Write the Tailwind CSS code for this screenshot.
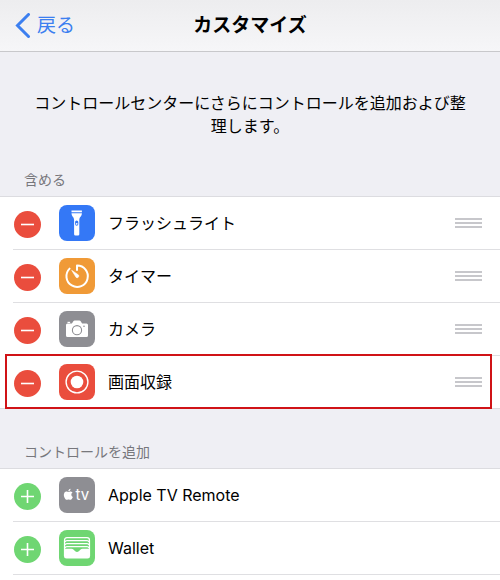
<!DOCTYPE html>
<html lang="ja">
  <head>
    <meta charset="UTF-8" />
    <meta name="viewport" content="width=device-width, initial-scale=1.0" />
    <title>カスタマイズ</title>
    <script src="https://cdn.jsdelivr.net/npm/@tailwindcss/browser@4"></script>
  </head>
  <body
    class="flex min-h-screen flex-col bg-[#efeff4] font-['Inter','Noto_Sans_CJK_JP',sans-serif] text-base text-black"
  >
    <header
      class="grid h-[52px] grid-cols-[1fr_auto_1fr] items-center border-b border-[#c8c8cb] bg-linear-to-b from-[#ededef] to-[#f6f6f8] px-[15px] pt-px text-[19px]"
    >
      <button type="button" class="flex items-center gap-1.5 text-[#3c7ff0]">
        <svg class="h-[26px] w-4" viewBox="0 0 16 26" fill="none" aria-hidden="true">
          <path d="M13.5 1.5 2.5 12.500l11 11" stroke="currentColor" stroke-width="3" stroke-linecap="round" />
        </svg>
        戻る
      </button>
      <h1 class="font-bold">カスタマイズ</h1>
    </header>

    <main class="flex grow flex-col">
      <p class="px-8 pt-10 text-center leading-[23px]">
        コントロールセンターにさらにコントロールを追加および整理します。
      </p>

      <!-- 含める -->
      <h2 class="px-6 pt-8 pb-1.5 text-sm leading-5 text-[#77777c]">含める</h2>
      <ul class="border-t border-[#dcdce0] bg-white">
        <li class="flex h-[53px] pl-[13px]">
          <div class="flex grow items-center border-b border-[#dfdfe2] pr-[18px]">
            <button type="button" class="pt-0.5 pl-px" aria-label="フラッシュライトを削除">
              <svg class="size-[27px]" viewBox="0 0 27 27" aria-hidden="true">
                <circle cx="13.5" cy="13.5" r="13.5" fill="#ea4d3d" />
                <path d="M7 13.5h13" stroke="#fff" stroke-width="1.6" />
              </svg>
            </button>
            <svg class="ml-[18px] size-9" viewBox="0 0 36 36" aria-hidden="true">
              <rect width="36" height="36" rx="8" fill="#3478f6" />
              <path d="M12.5 5.5h10.4v1.7H12.5zM12.5 8.2h10.4c0 3-2.6 3.9-2.6 6.6v14.4q0 1.3-1.3 1.3h-2.6q-1.3 0-1.3-1.3V14.8c0-2.7-2.6-3.6-2.6-6.6z" fill="#fff" />
              <rect x="16.1" y="15.5" width="3.2" height="5.2" rx="1.6" fill="#3478f6" />
              <circle cx="17.7" cy="18.8" r="0.9" fill="#fff" />
            </svg>
            <span class="grow pl-[13px]">フラッシュライト</span>
            <button type="button" aria-label="フラッシュライトを並べ替え">
              <svg class="h-2.5 w-[27px]" viewBox="0 0 27 10" fill="#c7c7cb" aria-hidden="true">
                <path d="M0 0h27v2H0zM0 4h27v2H0zM0 8h27v2H0z" />
              </svg>
            </button>
          </div>
        </li>
        <li class="flex h-[53px] pl-[13px]">
          <div class="flex grow items-center border-b border-[#dfdfe2] pr-[18px]">
            <button type="button" class="pt-0.5 pl-px" aria-label="タイマーを削除">
              <svg class="size-[27px]" viewBox="0 0 27 27" aria-hidden="true">
                <circle cx="13.5" cy="13.5" r="13.5" fill="#ea4d3d" />
                <path d="M7 13.5h13" stroke="#fff" stroke-width="1.6" />
              </svg>
            </button>
            <svg class="ml-[18px] size-9" viewBox="0 0 36 36" aria-hidden="true">
              <rect width="36" height="36" rx="8" fill="#f09a37" />
              <path d="M18 12V7.5A10.7 10.7 0 1 1 10.6 10.6" fill="none" stroke="#fff" stroke-width="2" stroke-linecap="round" stroke-linejoin="round" />
              <path d="M12.700 12.3 19.5 17a1.700 1.700 0 0 1-2.300 2.400z" fill="#fff" stroke="#fff" stroke-width="0.6" stroke-linejoin="round" />
            </svg>
            <span class="grow pl-[13px]">タイマー</span>
            <button type="button" aria-label="タイマーを並べ替え">
              <svg class="h-2.5 w-[27px]" viewBox="0 0 27 10" fill="#c7c7cb" aria-hidden="true">
                <path d="M0 0h27v2H0zM0 4h27v2H0zM0 8h27v2H0z" />
              </svg>
            </button>
          </div>
        </li>
        <li class="flex h-[53px] pl-[13px]">
          <div class="flex grow items-center border-b border-[#dfdfe2] pr-[18px]">
            <button type="button" class="pt-0.5 pl-px" aria-label="カメラを削除">
              <svg class="size-[27px]" viewBox="0 0 27 27" aria-hidden="true">
                <circle cx="13.5" cy="13.5" r="13.5" fill="#ea4d3d" />
                <path d="M7 13.5h13" stroke="#fff" stroke-width="1.6" />
              </svg>
            </button>
            <svg class="ml-[18px] size-9" viewBox="0 0 36 36" aria-hidden="true">
              <rect width="36" height="36" rx="8" fill="#8e8e93" />
              <path d="M8.5 12.4h4.4l1.6-2.3q.4-.6 1.100-.6h4.800q.7 0 1.100.6l1.600 2.300h4.400q1.500 0 1.500 1.500v10.600q0 1.500-1.500 1.500h-19q-1.500 0-1.500-1.500V13.9q0-1.500 1.500-1.500z" fill="#fff" />
              <rect x="8.5" y="10.8" width="2.6" height="1.2" fill="#fff" />
              <circle cx="18" cy="19.2" r="4.6" fill="none" stroke="#8e8e93" stroke-width="1.1" />
              <circle cx="25" cy="15.2" r="0.8" fill="#8e8e93" />
            </svg>
            <span class="grow pl-[13px]">カメラ</span>
            <button type="button" aria-label="カメラを並べ替え">
              <svg class="h-2.5 w-[27px]" viewBox="0 0 27 10" fill="#c7c7cb" aria-hidden="true">
                <path d="M0 0h27v2H0zM0 4h27v2H0zM0 8h27v2H0z" />
              </svg>
            </button>
          </div>
        </li>
        <li class="relative flex h-[53px] border-b border-[#dcdce0] pl-[13px]">
          <div class="flex grow items-center pr-[18px]">
            <button type="button" class="pt-0.5 pl-px" aria-label="画面収録を削除">
              <svg class="size-[27px]" viewBox="0 0 27 27" aria-hidden="true">
                <circle cx="13.5" cy="13.5" r="13.5" fill="#ea4d3d" />
                <path d="M7 13.5h13" stroke="#fff" stroke-width="1.6" />
              </svg>
            </button>
            <svg class="ml-[18px] size-9" viewBox="0 0 36 36" aria-hidden="true">
              <rect width="36" height="36" rx="8" fill="#ea4d3d" />
              <circle cx="18" cy="18" r="10.9" fill="none" stroke="#fff" stroke-width="1.4" />
              <circle cx="18" cy="18" r="6.3" fill="#fff" />
            </svg>
            <span class="grow pl-[13px]">画面収録</span>
            <button type="button" aria-label="画面収録を並べ替え">
              <svg class="h-2.5 w-[27px]" viewBox="0 0 27 10" fill="#c7c7cb" aria-hidden="true">
                <path d="M0 0h27v2H0zM0 4h27v2H0zM0 8h27v2H0z" />
              </svg>
            </button>
          </div>
          <!-- 強調枠 -->
          <div class="pointer-events-none absolute -top-0.5 right-2 -bottom-px left-[5px] border-2 border-[#d01317]"></div>
        </li>
      </ul>

      <!-- コントロールを追加 -->
      <h2 class="px-6 pt-[33px] pb-1.5 text-sm leading-5 text-[#77777c]">コントロールを追加</h2>
      <ul class="grow border-t border-[#dcdce0] bg-white">
        <li class="flex h-[53px] pl-[13px]">
          <div class="flex grow items-center border-b border-[#dfdfe2] pr-[18px]">
            <button type="button" class="pt-0.5 pl-px" aria-label="Apple TV Remoteを追加">
              <svg class="size-[27px]" viewBox="0 0 27 27" aria-hidden="true">
                <circle cx="13.5" cy="13.5" r="13.5" fill="#6fd672" />
                <path d="M7 13.5h13M13.5 7v13" stroke="#fff" stroke-width="1.6" />
              </svg>
            </button>
            <svg class="ml-[18px] size-9" viewBox="0 0 36 36" aria-hidden="true">
              <rect width="36" height="36" rx="8" fill="#8e8e93" />
              <path transform="translate(3.8 11.8) scale(.46)" d="M12.152 6.896c-.948 0-2.415-1.078-3.96-1.04-2.04.027-3.91 1.183-4.961 3.014-2.117 3.675-.546 9.103 1.519 12.09 1.013 1.454 2.208 3.09 3.792 3.039 1.52-.065 2.09-.987 3.935-.987 1.831 0 2.35.987 3.96.948 1.637-.026 2.676-1.48 3.676-2.948 1.156-1.688 1.636-3.325 1.662-3.415-.039-.013-3.182-1.221-3.22-4.857-.026-3.04 2.48-4.494 2.597-4.559-1.429-2.09-3.623-2.324-4.39-2.376-2-.156-3.675 1.09-4.61 1.09zM15.53 3.83c.843-1.012 1.4-2.427 1.245-3.83-1.207.052-2.662.805-3.532 1.818-.78.896-1.454 2.338-1.273 3.714 1.338.104 2.715-.688 3.559-1.701" fill="#fff" />
              <text x="16.5" y="23" font-size="15" fill="#fff">tv</text>
            </svg>
            <span class="grow pl-[13px]">Apple TV Remote</span>
          </div>
        </li>
        <li class="flex h-[53px] pl-[13px]">
          <div class="flex grow items-center border-b border-[#dfdfe2] pr-[18px]">
            <button type="button" class="pt-0.5 pl-px" aria-label="Walletを追加">
              <svg class="size-[27px]" viewBox="0 0 27 27" aria-hidden="true">
                <circle cx="13.5" cy="13.5" r="13.5" fill="#6fd672" />
                <path d="M7 13.5h13M13.5 7v13" stroke="#fff" stroke-width="1.6" />
              </svg>
            </button>
            <svg class="ml-[18px] size-9" viewBox="0 0 36 36" aria-hidden="true">
              <rect width="36" height="36" rx="8" fill="#6fd672" />
              <path d="M5.5 26V10.200q0-2.500 2.500-2.500h20q2.500 0 2.500 2.500V26" fill="none" stroke="#fff" stroke-width="1.2" />
              <path d="M6 12q.3-1.300 2-1.300h20q1.700 0 2 1.300M6 15q.3-1.300 2-1.300h20q1.700 0 2 1.300M6 18q.3-1.300 2-1.300h20q1.700 0 2 1.300" fill="none" stroke="#fff" stroke-width="1.3" />
              <path d="M5 18.800h7.500q1.200 0 1.900.7l1.800 1.700q1.800 1.400 3.600 0l1.800-1.700q.7-.7 1.900-.7H31v7.200q0 2.500-2.500 2.500h-21Q5 28.500 5 26z" fill="#fff" />
            </svg>
            <span class="grow pl-[13px]">Wallet</span>
          </div>
        </li>
      </ul>
    </main>
  </body>
</html>
